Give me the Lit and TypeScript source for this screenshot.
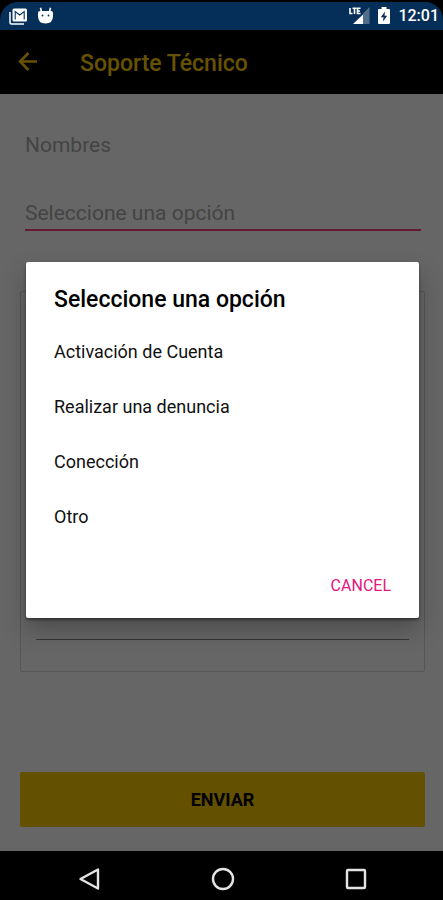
import { LitElement, html, css } from "lit";
import { customElement, property } from "lit/decorators.js";

@customElement("status-bar")
class StatusBar extends LitElement {
  static styles = css`
    :host {
      display: block;
      background: #000;
      color: #fff;
      font-family: Roboto, sans-serif;
    }
    .bar {
      display: flex;
      align-items: center;
      height: 28px;
      margin-top: 2px;
      padding: 0 4px 0 9px;
      background: #052f58;
      border-radius: 18px 18px 0 0;
    }
    .left,
    .right {
      display: flex;
      align-items: center;
    }
    .left {
      gap: 10px;
      flex: 1;
    }
    .right {
      gap: 8px;
    }
    .time {
      font-size: 16px;
      line-height: 28px;
      font-weight: 500;
    }
    svg {
      display: block;
    }
  `;
  render() {
    return html`
      <div class="bar">
        <div class="left">
          <svg width="18" height="17" viewBox="0 0 18 17">
            <path d="M1 4v10.500q0 1.500 1.500 1.500H15" fill="none" stroke="#fff" stroke-width="1.500" />
            <rect x="3.500" y="0.500" width="14.500" height="13" rx="1.500" fill="#fff" />
            <path d="M6.200 11.500V3.500l4.500 3.500 4.500-3.500v8" fill="none" stroke="#052f58" stroke-width="1.100" />
          </svg>
          <svg width="17" height="18" viewBox="0 0 17 18">
            <path d="M3.500 0.800 4.500 5M13.500 0.800 12.500 5" stroke="#fff" stroke-width="1.600" />
            <path
              d="M1 6q0-2 2-2h11q2 0 2 2v3q0 7.500-7.500 7.500T1 9z"
              fill="#fff"
            />
            <circle cx="5.500" cy="8.500" r="0.900" fill="#052f58" />
            <circle cx="11.500" cy="8.500" r="0.900" fill="#052f58" />
          </svg>
        </div>
        <div class="right">
          <svg width="21" height="18" viewBox="0 0 21 18">
            <path d="M20.500 0v17H14V6.500z" fill="#fff" opacity="0.300" />
            <path d="M4 17 14 7.500V17z" fill="#fff" />
            <path
              d="M1 1v5.500h2.500M3.500 1.300h4M5.500 1.300V7M11.500 1.300H8.500v5.200h3M8.500 4h2.500"
              fill="none"
              stroke="#fff"
              stroke-width="1.600"
            />
          </svg>
          <svg width="12" height="18" viewBox="0 0 12 18">
            <path d="M3.500 0h5v2H11q1 0 1 1v13q0 1-1 1H1q-1 0-1-1V3q0-1 1-1h2.500z" fill="#fff" />
            <path d="M7 4.500 2.800 10.300H5.500L5 14.500 9.200 8.700H6.500z" fill="#052f58" />
          </svg>
          <span class="time">12:01</span>
        </div>
      </div>
    `;
  }
}

@customElement("option-dialog")
class OptionDialog extends LitElement {
  @property() heading = "";
  @property({ attribute: false }) options: string[] = [];

  static styles = css`
    :host {
      display: block;
      background: #fff;
      border-radius: 2px;
      box-shadow: 0 2px 3px rgba(0, 0, 0, 0.4), 0 12px 24px rgba(0, 0, 0, 0.25);
      font-family: Roboto, sans-serif;
      color: #000;
    }
    h2 {
      margin: 0;
      padding: 24px 28px 10px;
      font-size: 23px;
      line-height: 28px;
      font-weight: 500;
    }
    ul {
      margin: 0;
      padding: 0;
      list-style: none;
    }
    button {
      border: 0;
      background: none;
      font-family: inherit;
      cursor: pointer;
    }
    .option {
      display: block;
      width: 100%;
      height: 55px;
      padding: 0 28px;
      text-align: left;
      font-size: 18px;
      color: #111;
    }
    .actions {
      display: flex;
      justify-content: flex-end;
      padding: 22px 16px 12px;
    }
    .cancel {
      height: 40px;
      padding: 0 12px;
      font-size: 16px;
      color: #e8147c;
    }
  `;
  render() {
    return html`
      <h2>${this.heading}</h2>
      <ul>
        ${this.options.map(
          (o) => html`<li><button class="option" type="button">${o}</button></li>`
        )}
      </ul>
      <div class="actions">
        <button class="cancel" type="button">CANCEL</button>
      </div>
    `;
  }
}

@customElement("app-root")
class AppRoot extends LitElement {
  static styles = css`
    :host {
      display: flex;
      flex-direction: column;
      min-height: 100vh;
      background: #000;
      font-family: Roboto, sans-serif;
    }
    .screen {
      position: relative;
      flex: 1;
      display: flex;
      flex-direction: column;
      background: #fff;
    }
    .toolbar {
      display: flex;
      align-items: center;
      gap: 40px;
      height: 64px;
      padding: 0 16px;
      background: #000;
      color: #ffcc00;
    }
    .toolbar h1 {
      margin: 0;
      padding-top: 4px;
      font-size: 23px;
      line-height: 28px;
      font-weight: 500;
    }
    button {
      padding: 0;
      border: 0;
      background: none;
      font-family: inherit;
      color: inherit;
    }
    svg {
      display: block;
    }
    form {
      flex: 1;
      display: flex;
      flex-direction: column;
      padding: 28px 18px 24px 20px;
    }
    input,
    textarea {
      box-sizing: border-box;
      width: 100%;
      border: 0;
      border-radius: 0;
      background: none;
      font-family: inherit;
      font-size: 21px;
      outline: 0;
    }
    input {
      height: 46px;
      padding: 0;
    }
    input::placeholder {
      color: #aaa;
      opacity: 1;
    }
    .fields {
      display: flex;
      flex-direction: column;
      gap: 28px;
      padding: 0 4px 0 5px;
    }
    .active {
      height: 35px;
      border-bottom: 2px solid #ff4081;
    }
    .card {
      display: flex;
      margin-top: 60px;
      padding: 16px 15px 31px;
      min-height: 332px;
      border: 1px solid #d8d8d8;
      border-radius: 2px;
    }
    textarea {
      border-bottom: 1px solid #888;
      resize: none;
    }
    .send {
      height: 55px;
      margin-top: auto;
      border-radius: 2px;
      background: #f8c800;
      color: #000;
      font-size: 18px;
      font-weight: 700;
    }
    .scrim {
      position: absolute;
      inset: 0;
      display: grid;
      align-items: center;
      padding: 0 24px 2px 26px;
      background: rgba(0, 0, 0, 0.6);
    }
    .nav {
      display: flex;
      height: 49px;
      padding: 6px 20px 0 23px;
      box-sizing: border-box;
    }
    .nav button {
      flex: 1;
      display: grid;
      place-items: center;
    }
  `;
  render() {
    return html`
      <status-bar></status-bar>
      <main class="screen">
        <header class="toolbar">
          <button type="button" aria-label="Atrás">
            <svg width="24" height="24" viewBox="0 0 24 24">
              <path
                d="M21 11.500H4.500M12.500 3 4 11.500l8.500 8.500"
                fill="none"
                stroke="currentColor"
                stroke-width="2.500"
              />
            </svg>
          </button>
          <h1>Soporte Técnico</h1>
        </header>
        <form>
          <div class="fields">
            <input type="text" aria-label="Nombres" placeholder="Nombres" />
            <input
              class="active"
              type="text"
              aria-label="Seleccione una opción"
              placeholder="Seleccione una opción"
            />
          </div>
          <div class="card"><textarea aria-label="Mensaje"></textarea></div>
          <button class="send" type="button">ENVIAR</button>
        </form>
        <div class="scrim">
          <option-dialog
            role="dialog"
            heading="Seleccione una opción"
            .options=${["Activación de Cuenta", "Realizar una denuncia", "Conección", "Otro"]}
          ></option-dialog>
        </div>
      </main>
      <nav class="nav">
        <button type="button" aria-label="Volver">
          <svg width="24" height="24" viewBox="0 0 24 24">
            <path d="M20 2.500v19L2.500 12z" fill="none" stroke="#e4e4e4" stroke-width="2.400" stroke-linejoin="round" />
          </svg>
        </button>
        <button type="button" aria-label="Inicio">
          <svg width="24" height="24" viewBox="0 0 24 24">
            <circle cx="12" cy="12" r="10" fill="none" stroke="#e4e4e4" stroke-width="2.400" />
          </svg>
        </button>
        <button type="button" aria-label="Recientes">
          <svg width="24" height="24" viewBox="0 0 24 24">
            <rect x="3" y="3" width="18" height="18" rx="1" fill="none" stroke="#e4e4e4" stroke-width="2.400" />
          </svg>
        </button>
      </nav>
    `;
  }
}
